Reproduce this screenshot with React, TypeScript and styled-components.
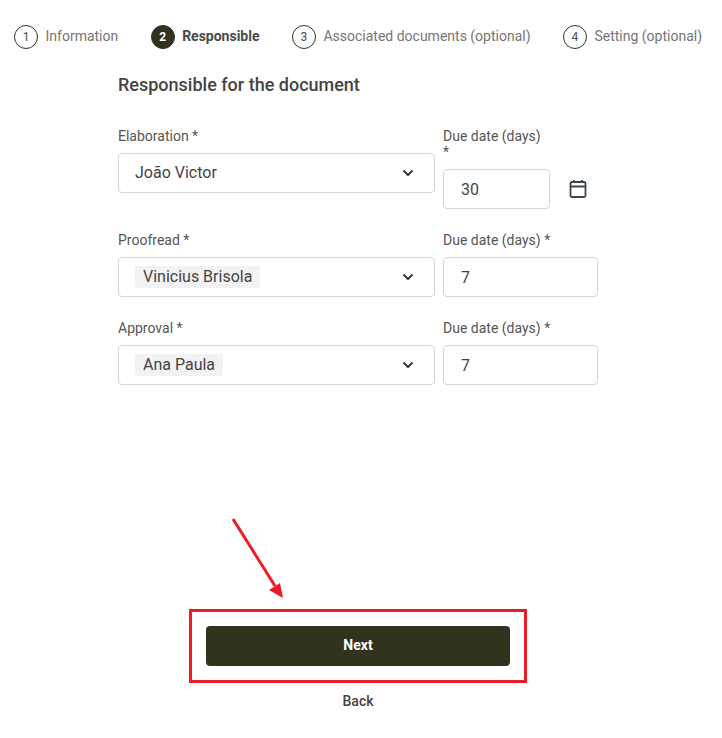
import React, { FC } from 'react';
import styled, { createGlobalStyle } from 'styled-components';

const GlobalStyle = createGlobalStyle`
  html, body {
    margin: 0;
    padding: 0;
    background: #fff;
    font-family: Roboto, "Liberation Sans", sans-serif;
    color: #3f3f3f;
  }
  * {
    box-sizing: border-box;
  }
`;

const Page = styled.div`
  width: 722px;
  height: 738px;
  overflow: hidden;
  padding-top: 25px;
`;

const Stepper = styled.div`
  display: flex;
  padding-left: 14px;
  gap: 32.4px;
  height: 24px;
`;

const Step = styled.div`
  display: flex;
  align-items: center;
  gap: 7.5px;
  white-space: nowrap;
`;

const StepNumber = styled.div<{ $active?: boolean }>`
  width: 24px;
  height: 24px;
  flex-shrink: 0;
  border-radius: 50%;
  border: 1px solid #32331f;
  display: flex;
  align-items: center;
  justify-content: center;
  padding-bottom: 1px;
  font-size: 12px;
  font-weight: ${(p) => (p.$active ? 700 : 400)};
  background: ${(p) => (p.$active ? '#32331f' : '#fff')};
  color: ${(p) => (p.$active ? '#fff' : '#4a4a4a')};
`;

const StepLabel = styled.span<{ $active?: boolean }>`
  font-size: 14px;
  line-height: 16px;
  padding-bottom: 2px;
  font-weight: ${(p) => (p.$active ? 700 : 400)};
  color: ${(p) => (p.$active ? '#4a4a4a' : '#757575')};
`;

const Form = styled.div`
  width: 480px;
  margin: 24px 0 0 118px;
`;

const Title = styled.h2`
  margin: 0 0 31px;
  font-size: 18px;
  line-height: 24px;
  font-weight: 500;
  color: #444;
`;

const Row = styled.div`
  display: grid;
  grid-template-columns: 317px 155px;
  column-gap: 8px;
  align-items: start;
  margin-bottom: 23px;
`;

const Field = styled.div``;

const Label = styled.label`
  display: block;
  font-size: 14px;
  line-height: 16px;
  margin-bottom: 9px;
  color: #555;
`;

const SelectBox = styled.div`
  height: 40px;
  border: 1px solid #d5d5d5;
  border-radius: 4px;
  display: flex;
  align-items: center;
  justify-content: space-between;
  padding: 0 20px 0 16px;
  font-size: 16px;
  color: #444;
  background: #fff;
`;

const PlainValue = styled.span`
  line-height: 20px;
  padding-bottom: 1px;
`;

const Tag = styled.span`
  background: #f2f2f2;
  border-radius: 2px;
  padding: 0 8px;
  line-height: 22px;
`;

const DateRow = styled.div`
  display: flex;
  align-items: center;
  gap: 18px;
`;

const NumberBox = styled.div<{ $short?: boolean }>`
  width: ${(p) => (p.$short ? '107px' : '100%')};
  height: 40px;
  border: 1px solid #d5d5d5;
  border-radius: 4px;
  display: flex;
  align-items: center;
  padding-left: 17px;
  font-size: 16px;
  color: #444;
  background: #fff;
`;

const Footer = styled.div`
  position: relative;
  width: 304px;
  margin: 241px 0 0 206px;
`;

const NextButton = styled.button`
  display: block;
  width: 100%;
  height: 40px;
  border: 0;
  border-radius: 4px;
  padding: 0 0 2px;
  background: #32331f;
  color: #fff;
  font-family: inherit;
  font-size: 14px;
  font-weight: 700;
`;

const BackLink = styled.div`
  margin-top: 27px;
  text-align: center;
  font-size: 14px;
  line-height: 16px;
  font-weight: 500;
  color: #444;
`;

const Highlight = styled.div`
  position: absolute;
  left: -17px;
  top: -17px;
  width: 338px;
  height: 74px;
  border: 3px solid #ed1c24;
  pointer-events: none;
`;

const Arrow = styled.svg`
  position: absolute;
  left: 22px;
  top: -112px;
`;

const Chevron: FC = () => (
  <svg width="12" height="8" viewBox="0 0 12 8" fill="none">
    <path d="M1.5 1.5 6 6l4.5-4.5" stroke="#2f3a3f" strokeWidth="2" />
  </svg>
);

const CalendarIcon: FC = () => (
  <svg width="20" height="20" viewBox="0 0 20 20" fill="none">
    <rect x="2.5" y="3" width="15" height="15" rx="1.5" stroke="#3b4650" strokeWidth="1.8" />
    <path d="M2.5 7.5h15M6 1v3M14 1v3" stroke="#3b4650" strokeWidth="1.8" />
  </svg>
);

const steps = [
  { n: 1, label: 'Information' },
  { n: 2, label: 'Responsible', active: true },
  { n: 3, label: 'Associated documents (optional)' },
  { n: 4, label: 'Setting (optional)' },
];

export default function App() {
  return (
    <Page>
      <GlobalStyle />
      <Stepper>
        {steps.map((s) => (
          <Step key={s.n}>
            <StepNumber $active={s.active}>{s.n}</StepNumber>
            <StepLabel $active={s.active}>{s.label}</StepLabel>
          </Step>
        ))}
      </Stepper>

      <Form>
        <Title>Responsible for the document</Title>

        <Row>
          <Field>
            <Label>Elaboration *</Label>
            <SelectBox>
              <PlainValue>João Victor</PlainValue>
              <Chevron />
            </SelectBox>
          </Field>
          <Field>
            <Label>
              Due date (days)
              <br />*
            </Label>
            <DateRow>
              <NumberBox $short>30</NumberBox>
              <CalendarIcon />
            </DateRow>
          </Field>
        </Row>

        <Row>
          <Field>
            <Label>Proofread *</Label>
            <SelectBox>
              <Tag>Vinicius Brisola</Tag>
              <Chevron />
            </SelectBox>
          </Field>
          <Field>
            <Label>Due date (days) *</Label>
            <NumberBox>7</NumberBox>
          </Field>
        </Row>

        <Row>
          <Field>
            <Label>Approval *</Label>
            <SelectBox>
              <Tag>Ana Paula</Tag>
              <Chevron />
            </SelectBox>
          </Field>
          <Field>
            <Label>Due date (days) *</Label>
            <NumberBox>7</NumberBox>
          </Field>
        </Row>
      </Form>

      <Footer>
        <Arrow width="60" height="90" viewBox="0 0 60 90" fill="none">
          <path d="M5 5 47 72" stroke="#ed1c24" strokeWidth="3" />
          <path d="M41 76 52 69 55 84z" fill="#ed1c24" />
        </Arrow>
        <NextButton>Next</NextButton>
        <Highlight />
        <BackLink>Back</BackLink>
      </Footer>
    </Page>
  );
}
